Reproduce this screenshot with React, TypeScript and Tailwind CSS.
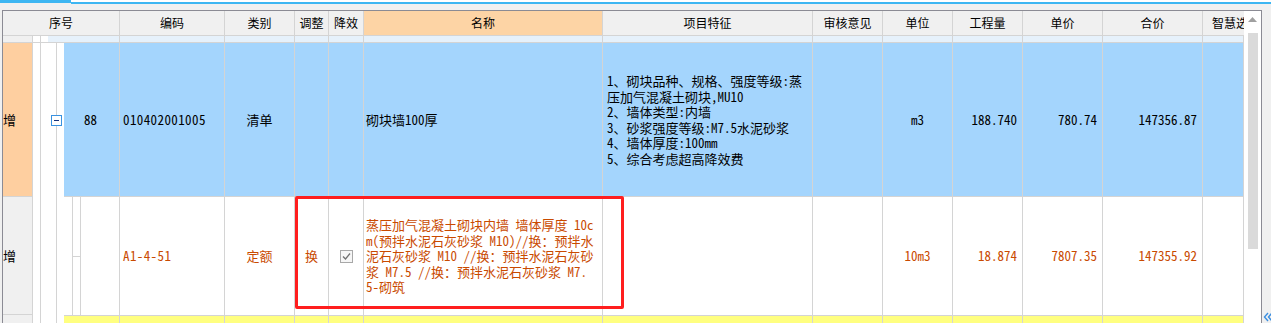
const W = [
  'w-[105px]',
  'w-[70px]',
  'w-[34px]',
  'w-[35px]',
  'w-[239px]',
  'w-[210px]',
  'w-[70px]',
  'w-[70px]',
  'w-[70px]',
  'w-[80px]',
  'w-[100px]',
  'w-[41px]',
]

const headers = ['编码', '类别', '调整', '降效', '名称', '项目特征', '审核意见', '单位', '工程量', '单价', '合价', '智慧选价']

const features = [
  '1、砌块品种、规格、强度等级:蒸',
  '压加气混凝土砌块,MU10',
  '2、墙体类型:内墙',
  '3、砂浆强度等级:M7.5水泥砂浆',
  '4、墙体厚度:100mm',
  '5、综合考虑超高降效费',
]

const nameLines = [
  '蒸压加气混凝土砌块内墙 墙体厚度 10c',
  'm(预拌水泥石灰砂浆 M10)//换：预拌水',
  '泥石灰砂浆 M10 //换：预拌水泥石灰砂',
  '浆 M7.5 //换：预拌水泥石灰砂浆 M7.',
  '5-砌筑',
]

type Align = 'l' | 'c' | 'r'

function Cell({ w, align = 'c', className = '', children }: { w: string; align?: Align; className?: string; children?: React.ReactNode }) {
  const a = align === 'l' ? 'justify-start' : align === 'r' ? 'justify-end' : 'justify-center'
  return (
    <div className={`${w} shrink-0 h-full flex items-center border-r border-[#d4d4d4] whitespace-pre ${a} ${className}`}>
      {children}
    </div>
  )
}

function Lines({ lines }: { lines: string[] }) {
  return (
    <div className="leading-[15.5px]">
      {lines.map((l, i) => (
        <div key={i} className="whitespace-pre">{l}</div>
      ))}
    </div>
  )
}

function Checkbox() {
  return (
    <div className="w-[13px] h-[13px] border border-[#a8a8a8] bg-[#f6f6f6] flex items-center justify-center">
      <svg width="11" height="11" viewBox="0 0 11 11">
        <path d="M2 5.5 L4.5 8 L9 2.5" fill="none" stroke="#707070" strokeWidth="1.3" />
      </svg>
    </div>
  )
}

export default function App() {
  const dataFont = "font-['Noto_Sans_Mono_CJK_SC','Noto_Sans_CJK_SC',monospace]"
  return (
    <div className="relative w-[1271px] h-[323px] overflow-hidden bg-[#f0f0f0] font-['Noto_Sans_CJK_SC',sans-serif] text-black">
      {/* top tab strip */}
      <div className="flex h-[4px]">
        <div className="w-[71px] flex flex-col">
          <div className="h-[3px] bg-[#3db6f2]" />
        </div>
        <div className="flex-1 flex flex-col">
          <div className="h-[2px] bg-white" />
          <div className="h-[2px] bg-[#3db6f2]" />
        </div>
      </div>

      <div className="mt-[6px] ml-[2px] w-[1260px] h-[320px] border-x border-t border-[#8b8b94] flex">
        <div className="w-[1241px] shrink-0 flex flex-col">
          {/* header */}
          <div className="flex h-[25px] shrink-0 border-b border-[#d4d4d4] text-[12px]">
            <Cell w="w-[117px]">序号</Cell>
            {headers.map((h, i) =>
              i === 11 ? (
                <div key={h} className={`${W[i]} shrink-0 h-full flex items-center overflow-hidden pl-[9px] whitespace-nowrap`}>
                  {h}
                </div>
              ) : (
                <Cell key={h} w={W[i]} className={i === 4 ? 'bg-[#fdd4a5]' : ''}>
                  {h}
                </Cell>
              )
            )}
          </div>

          {/* partially scrolled row */}
          <div className="flex h-[7px] shrink-0 border-b border-[#d4d4d4]">
            <div className="w-[30px] shrink-0 bg-[#f0f0f0] border-r border-[#d4d4d4]" />
            <div className="w-[8px] shrink-0 bg-white border-r border-[#d4d4d4]" />
            <div className="w-[7px] shrink-0 bg-white" />
            <Cell w="w-[72px]" className="bg-[#e6f1fb]" />
            {W.map((w, i) => (
              <Cell key={i} w={w} className="bg-[#e6f1fb]" />
            ))}
          </div>

          {/* row 1: 清单 */}
          <div className={`flex h-[154px] shrink-0 text-[13px] ${dataFont}`}>
            <div className="w-[30px] shrink-0 bg-[#fecfa0] border-r border-b border-[#d4d4d4] flex items-center overflow-hidden font-['Noto_Sans_CJK_SC',sans-serif]">
              增
            </div>
            <div className="w-[8px] shrink-0 bg-white border-r border-[#d4d4d4]" />
            <div className="relative w-[16px] shrink-0 bg-white border-r border-[#d4d4d4] flex items-center">
              <div className="absolute left-[10px] w-[11px] h-[11px] border border-[#3a92e0] bg-white flex items-center justify-center">
                <div className="w-[5px] h-[1px] bg-[#16307a]" />
              </div>
            </div>
            <div className="w-[7px] shrink-0 bg-white" />
            <div className="flex flex-1 bg-[#a4d5fd] border-b border-[#d4d4d4]">
              <Cell w="w-[56px]" className="pr-[2px]">88</Cell>
              <Cell w={W[0]} align="l" className="pl-[3px] tracking-[0.4px]">010402001005</Cell>
              <Cell w={W[1]} className="font-['Noto_Sans_CJK_SC',sans-serif]">清单</Cell>
              <Cell w={W[2]} />
              <Cell w={W[3]} />
              <Cell w={W[4]} align="l" className="pl-[2px]">砌块墙100厚</Cell>
              <Cell w={W[5]} align="l" className="pl-[4px]">
                <Lines lines={features} />
              </Cell>
              <Cell w={W[6]} />
              <Cell w={W[7]}>m3</Cell>
              <Cell w={W[8]} align="r" className="pr-[5px]">188.740</Cell>
              <Cell w={W[9]} align="r" className="pr-[5px]">780.74</Cell>
              <Cell w={W[10]} align="r" className="pr-[5px]">147356.87</Cell>
              <Cell w={W[11]} />
            </div>
          </div>

          {/* row 2: 定额 */}
          <div className={`flex h-[118px] shrink-0 text-[13px] text-[#c94a00] ${dataFont}`}>
            <div className="w-[30px] shrink-0 bg-[#f0f0f0] border-r border-b border-[#d4d4d4] flex items-center overflow-hidden text-black font-['Noto_Sans_CJK_SC',sans-serif]">
              增
            </div>
            <div className="w-[8px] shrink-0 bg-white border-r border-[#d4d4d4]" />
            <div className="w-[16px] shrink-0 bg-white border-r border-[#d4d4d4]" />
            <div className="w-[16px] shrink-0 bg-white border-r border-[#d4d4d4]" />
            <div className="w-[8px] shrink-0 bg-white border-r border-[#d4d4d4] flex items-center">
              <div className="h-[1px] w-full bg-[#d4d4d4]" />
            </div>
            <div className="flex flex-1 bg-white">
              <Cell w="w-[39px]" />
              <Cell w={W[0]} align="l" className="pl-[3px] tracking-[0.4px]">A1-4-51</Cell>
              <Cell w={W[1]}>定额</Cell>
              <Cell w={W[2]}>换</Cell>
              <Cell w={W[3]}>
                <Checkbox />
              </Cell>
              <Cell w={W[4]} align="l" className="pl-[2px]">
                <Lines lines={nameLines} />
              </Cell>
              <Cell w={W[5]} />
              <Cell w={W[6]} />
              <Cell w={W[7]}>10m3</Cell>
              <Cell w={W[8]} align="r" className="pr-[5px]">18.874</Cell>
              <Cell w={W[9]} align="r" className="pr-[5px]">7807.35</Cell>
              <Cell w={W[10]} align="r" className="pr-[5px]">147355.92</Cell>
              <Cell w={W[11]} />
            </div>
          </div>

          {/* row 3: yellow, cut off */}
          <div className="flex flex-1">
            <div className="w-[30px] shrink-0 bg-[#f0f0f0] border-r border-[#d4d4d4]" />
            <div className="w-[8px] shrink-0 bg-white border-r border-[#d4d4d4]" />
            <div className="w-[16px] shrink-0 bg-white border-r border-[#d4d4d4]" />
            <div className="w-[7px] shrink-0 bg-white" />
            <div className="flex flex-1 bg-[#ffff80] border-t border-[#d4d4d4]">
              <Cell w="w-[56px]" />
              {W.map((w, i) => (
                <Cell key={i} w={w} />
              ))}
            </div>
          </div>
        </div>

        {/* vertical scrollbar */}
        <div className="w-[17px] shrink-0 bg-white flex flex-col items-center">
          <div className="h-[16px] flex items-center justify-center">
            <svg width="9" height="5" viewBox="0 0 9 5">
              <path d="M0 5 L4.5 0 L9 5 Z" fill="#a0a0a0" />
            </svg>
          </div>
          <div className="mt-[6px] w-[10px] h-[216px] bg-[#dadada]" />
        </div>
      </div>

      {/* annotation */}
      <div className="absolute left-[295px] top-[196px] w-[329px] h-[113px] border-[3px] border-[#ff1e1e] rounded-[2px]" />

      {/* panel collapse glyph */}
      <div className="absolute left-[1263px] top-[311px]">
        <svg width="10" height="12" viewBox="0 0 10 12">
          <path d="M5 2 L1.5 6 L5 10 M9 2 L5.5 6 L9 10" fill="none" stroke="#3a8ee0" strokeWidth="1.4" />
        </svg>
      </div>
    </div>
  )
}
